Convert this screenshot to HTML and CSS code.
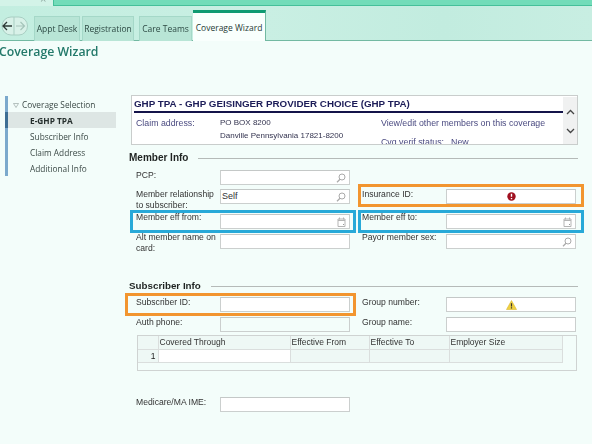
FILE: index.html
```html
<!DOCTYPE html>
<html lang="en">
<head>
<meta charset="utf-8">
<title>Coverage Wizard</title>
<link rel="stylesheet" href="styles.css">
</head>
<body>
<div class="page">
  <header class="topbar">
    <div class="topbar-left"><span class="close">×</span></div>
    <div class="topbar-fill"></div>
  </header>
  <nav class="tabstrip">
    <div class="navpill">
      <svg width="28" height="20" viewBox="0 0 28 20">
        <path d="M2 10a9 9 0 0 1 9-9h8a8.5 9 0 0 1 0 18h-8a9 9 0 0 1-9-9z" fill="#d8f1e8" stroke="#a9cfc3"/>
        <path d="M14 1v18" stroke="#a9cfc3"/>
        <path d="M12 10H3.500M7 6l-4 4 4 4" fill="none" stroke="#2c3a36" stroke-width="1.300"/>
        <path d="M16 10h8M20.500 6l4 4-4 4" fill="none" stroke="#a5c4ba" stroke-width="1.200"/>
      </svg>
    </div>
    <a class="tab tab-appt">Appt Desk</a>
    <a class="tab tab-reg">Registration</a>
    <a class="tab tab-care">Care Teams</a>
    <a class="tab tab-active">Coverage Wizard</a>
  </nav>
  <h1 class="title">Coverage Wizard</h1>
  <div class="content">
    <aside class="sidebar">
      <div class="side-group"><svg class="caret" width="6" height="5" viewBox="0 0 6 5"><path d="M.5.500h5L3 4.500z" fill="none" stroke="#9aa8a5" stroke-width=".7"/></svg>Coverage Selection</div>
      <div class="side-item selected">E-GHP TPA</div>
      <div class="side-item">Subscriber Info</div>
      <div class="side-item">Claim Address</div>
      <div class="side-item">Additional Info</div>
    </aside>
    <main class="main">
      <section class="card">
        <div class="card-body">
          <div class="card-title">GHP TPA - GHP GEISINGER PROVIDER CHOICE (GHP TPA)</div>
          <div class="card-cols">
            <span class="card-key">Claim address:</span>
            <div class="card-addr"><div>PO BOX 8200</div><div>Danville Pennsylvania 17821-8200</div></div>
            <div class="card-links">
              <div>View/edit other members on this coverage</div>
              <div class="verif"><span>Cvg verif status:</span><span>New</span></div>
            </div>
          </div>
        </div>
        <div class="scroll">
          <svg width="9" height="6" viewBox="0 0 9 6"><path d="M1 5l3.500-3.500L8 5" fill="none" stroke="#444" stroke-width="1.300"/></svg>
          <svg width="9" height="6" viewBox="0 0 9 6"><path d="M1 1l3.500 3.500L8 1" fill="none" stroke="#444" stroke-width="1.300"/></svg>
        </div>
      </section>

      <h2 class="section-head member-head"><span>Member Info</span></h2>
      <div class="form member-form">
        <label class="lbl">PCP:</label>
        <div class="input"><svg class="ico" width="10" height="10" viewBox="0 0 10 10"><circle cx="6" cy="4" r="3" fill="none" stroke="#aaa"/><path d="M4 6.300 1 9.300" stroke="#aaa" stroke-width="1.300"/></svg></div>
        <span></span>
        <span></span><span></span>

        <label class="lbl">Member relationship to subscriber:</label>
        <div class="input"><span class="val">Self</span><svg class="ico" width="10" height="10" viewBox="0 0 10 10"><circle cx="6" cy="4" r="3" fill="none" stroke="#aaa"/><path d="M4 6.300 1 9.300" stroke="#aaa" stroke-width="1.300"/></svg></div>
        <span></span>
        <label class="lbl">Insurance ID:<i class="mark orange mark-right mark-ins"></i></label>
        <div class="input center"><svg width="9" height="9" viewBox="0 0 9 9"><circle cx="4.500" cy="4.500" r="4.200" fill="#a01020"/><path d="M4.500 1.800v3M4.500 6v1.200" stroke="#fff" stroke-width="1.400"/></svg></div>

        <label class="lbl up">Member eff from:<i class="mark blue mark-left"></i></label>
        <div class="input"><svg class="ico" width="9" height="10" viewBox="0 0 9 10"><path d="M1 2h7v7.500H1zM1 3.500h7" fill="none" stroke="#b5b5b5"/><path d="M2.500.5v2M6.500.5v2" stroke="#b5b5b5"/><path d="M6 7h1v1H6z" fill="#999"/></svg></div>
        <span></span>
        <label class="lbl up">Member eff to:<i class="mark blue mark-right"></i></label>
        <div class="input"><svg class="ico" width="9" height="10" viewBox="0 0 9 10"><path d="M1 2h7v7.500H1zM1 3.500h7" fill="none" stroke="#b5b5b5"/><path d="M2.500.5v2M6.500.5v2" stroke="#b5b5b5"/><path d="M6 7h1v1H6z" fill="#999"/></svg></div>

        <label class="lbl up">Alt member name on card:</label>
        <div class="input"></div>
        <span></span>
        <label class="lbl up">Payor member sex:</label>
        <div class="input"><svg class="ico" width="10" height="10" viewBox="0 0 10 10"><circle cx="6" cy="4" r="3" fill="none" stroke="#aaa"/><path d="M4 6.300 1 9.300" stroke="#aaa" stroke-width="1.300"/></svg></div>
      </div>

      <h2 class="section-head sub-head"><span>Subscriber Info</span></h2>
      <div class="form sub-form">
        <label class="lbl">Subscriber ID:<i class="mark orange mark-sub"></i></label>
        <div class="input"></div>
        <span></span>
        <label class="lbl">Group number:</label>
        <div class="input center"><svg width="11" height="10" viewBox="0 0 11 10"><path d="M5.500.5 10.500 9.500H.5z" fill="#f0d040" stroke="#d8b830" stroke-width=".6"/><path d="M5.500 3.300v3.200M5.500 7.300v1.200" stroke="#333" stroke-width="1.200"/></svg></div>

        <label class="lbl">Auth phone:</label>
        <div class="input blank"></div>
        <span></span>
        <label class="lbl">Group name:</label>
        <div class="input"></div>
      </div>

      <div class="tablewrap">
        <table class="grid">
          <thead>
            <tr><th class="c0"></th><th class="c1">Covered Through</th><th class="c2">Effective From</th><th class="c3">Effective To</th><th class="c4">Employer Size</th></tr>
          </thead>
          <tbody>
            <tr><th class="rownum">1</th><td class="white"></td><td></td><td></td><td></td></tr>
          </tbody>
        </table>
      </div>

      <div class="form ime-form">
        <label class="lbl">Medicare/MA IME:</label>
        <div class="input"></div>
      </div>
    </main>
  </div>
</div>
</body>
</html>
```

FILE: styles.css
```css
* { box-sizing: border-box; }
html, body { margin: 0; padding: 0; }
body {
  width: 592px;
  height: 444px;
  overflow: hidden;
  background: #f3fdfa;
  font-family: "Liberation Sans", Arial, sans-serif;
  color: #2a2a2a;
}
.page { width: 592px; height: 444px; overflow: hidden; display: flex; flex-direction: column; filter: blur(.25px); }

.topbar { height: 6px; display: flex; flex: none; }
.topbar-left { width: 53px; background: #d3f3e8; position: relative; overflow: hidden; }
.close { position: absolute; left: 40px; top: -6px; font: 11px/11px "Liberation Sans", sans-serif; color: #8fa9a1; }
.topbar-fill { flex: 1; background: #72dcb9; border-bottom: 1px solid #45c09a; border-left: 1px solid #45c09a; }

.tabstrip {
  height: 35px;
  flex: none;
  display: flex;
  align-items: flex-end;
  background: linear-gradient(90deg, #c3eee0, #c9efe3 45%, #c2ecdf 75%, #c8eee2);
  border-bottom: 1px solid #72b9a2;
  font-family: "Open Sans", sans-serif;
}
.navpill { width: 34px; height: 20px; align-self: flex-start; margin-top: 10px; display: flex; }
.tab {
  height: 25px;
  margin-bottom: -1px;
  padding-bottom: 2px;
  display: flex;
  align-items: center;
  justify-content: center;
  font-size: 8.500px;
  color: #2d4a44;
  background: #b8e5d6;
  border: 1px solid #a5d8c8;
  border-bottom: 0;
}
.tab-appt { width: 46px; margin-right: 2px; }
.tab-reg { width: 52px; margin-right: 5px; }
.tab-care { width: 53px; margin-right: 1px; }
.tab-active {
  width: 73px;
  height: 31px;
  background: #f9fffd;
  border: 0;
  border-top: 3px solid #0f9a72;
  border-right: 1px solid #72b9a2;
  padding-bottom: 0;
  color: #263a36;
  position: relative;
  z-index: 1;
}

.title {
  margin: 0 0 0 -1px;
  height: 54px;
  flex: none;
  padding: 1px 0 0 0;
  font: 600 12.300px/20px "Open Sans", sans-serif;
  color: #23796a;
}

.content { flex: 1; display: flex; min-height: 0; }
.sidebar {
  width: 129px;
  flex: none;
  padding: 1px 13px 0 5px;
  font-family: "Open Sans", sans-serif;
  font-size: 8.300px;
  color: #3c4a47;
}
.side-group {
  height: 16px;
  display: flex;
  align-items: center;
  padding: 2px 0 0 5px;
  gap: 2px;
  border-left: 3px solid #7ba9cc;
  line-height: 14px;
}
.caret { flex: none; margin-right: 1px; }
.side-item {
  height: 16px;
  line-height: 18px;
  padding-left: 22px;
  border-left: 3px solid #7ba9cc;
}
.side-item.selected {
  font-weight: 700;
  background: #dde6e4;
  border-left-color: #3d6e93;
  color: #26302e;
}

.main { flex: 1; min-width: 0; }
.card {
  width: 447px;
  height: 50px;
  margin-left: 2px;
  background: #fff;
  border: 1px solid #c9cdcc;
  display: flex;
  overflow: hidden;
}
.card-body { flex: 1; min-width: 0; padding: 1px 0 0 2px; overflow: hidden; }
.card-title {
  height: 16px;
  font-size: 9.800px;
  line-height: 14px;
  font-weight: 700;
  color: #1c1c58;
  border-bottom: 2px solid #14144a;
  white-space: nowrap;
}
.card-cols { display: grid; grid-template-columns: 84px 161px 1fr; padding: 4px 0 0 2px; font-size: 8.800px; line-height: 12.500px; }
.card-key { color: #4a4a80; }
.card-addr { color: #33334f; font-size: 8px; }
.card-links { color: #4a4a80; }
.verif { display: flex; gap: 7px; margin-top: 6px; }
.scroll {
  width: 14px;
  background: #f0f1f1;
  display: flex;
  flex-direction: column;
  align-items: center;
  gap: 13px;
  padding-top: 12px;
  margin-top: 1px;
}

.section-head {
  margin: 0;
  display: flex;
  align-items: center;
  font-size: 10px;
  line-height: 12px;
  font-weight: 700;
  color: #1f2322;
  width: 449px;
}
.section-head::after { content: ""; flex: 1; height: 1px; background: #b5bab8; }
.member-head { margin-top: 7px; }
.member-head span { margin-right: 10px; }
.sub-head { margin-top: 16px; }
.sub-head span { margin-right: 10px; font-size: 9.800px; }

.form {
  display: grid;
  grid-template-columns: 84px 130px 12px 84px 130px;
  margin-left: 7px;
  align-items: start;
  font-size: 8.600px;
  line-height: 11px;
}
.member-form { grid-template-rows: 19px 25px 20px 30px; margin-top: 6px; }
.sub-form { grid-template-rows: 20px 18px; margin-top: 5px; }
.lbl { color: #333; padding-right: 3px; position: relative; }
.up { margin-top: -2px; }
.input {
  height: 15px;
  background: #fff;
  border: 1px solid #cbcfce;
  border-top-color: #c4c8c7;
  display: flex;
  align-items: center;
  justify-content: flex-end;
  padding: 0 3px;
  position: relative;
}
.input.blank { background: transparent; }
.input.center { justify-content: center; }
.val { margin-right: auto; margin-left: -2px; font-size: 9px; color: #333; }
.ico { flex: none; }

.mark { position: absolute; border-style: solid; border-width: 3px; height: 23px; width: 226px; top: -2px; display: block; z-index: 2; pointer-events: none; }
.mark-left { left: -6px; }
.mark-right { left: -4px; }
.mark-ins { top: -5px; }
.mark-sub { left: -11px; width: 231px; top: -4px; }
.blue { border-color: #28a9d8; }
.orange { border-color: #f2952f; }

.tablewrap {
  width: 440px;
  height: 36px;
  margin: 0 0 0 8px;
  border: 1px solid #cfd3d2;
  background: #f3fdfa;
}
.grid { border-collapse: collapse; table-layout: fixed; width: 424px; font-size: 8.500px; line-height: 12px; color: #333; }
.grid th, .grid td { padding: 0 0 0 1px; height: 13px; border: 1px solid #dadedd; text-align: left; font-weight: 400; background: #eef8f5; }
.grid thead th { height: 13px; border-top: 0; }
.grid .c0 { width: 20px; border-left: 0; }
.grid .c1 { width: 132px; }
.grid .c2 { width: 79px; }
.grid .c3 { width: 80px; }
.grid .c4 { width: 113px; }
.grid .rownum { text-align: right; padding-right: 2px; border-left: 0; color: #222; }
.grid td.white { background: #fff; }

.ime-form { margin-top: 26px; grid-template-columns: 84px 130px; }
```
